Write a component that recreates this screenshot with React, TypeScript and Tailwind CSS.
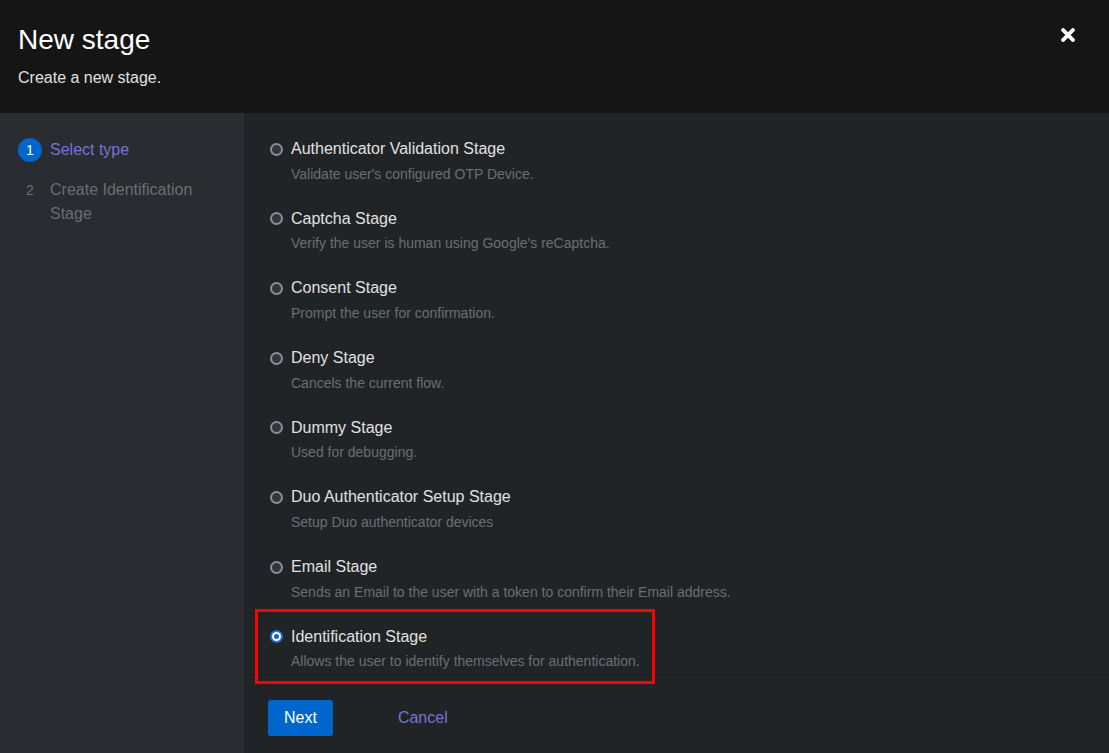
import React from "react";

const items = [
  ["Authenticator Validation Stage", "Validate user's configured OTP Device."],
  ["Captcha Stage", "Verify the user is human using Google's reCaptcha."],
  ["Consent Stage", "Prompt the user for confirmation."],
  ["Deny Stage", "Cancels the current flow."],
  ["Dummy Stage", "Used for debugging."],
  ["Duo Authenticator Setup Stage", "Setup Duo authenticator devices"],
  ["Email Stage", "Sends an Email to the user with a token to confirm their Email address."],
  ["Identification Stage", "Allows the user to identify themselves for authentication."],
];

function Radio({ checked }: { checked: boolean }) {
  if (checked) {
    return (
      <span className="w-[13px] h-[13px] rounded-full bg-[#1a73e8] flex items-center justify-center shrink-0">
        <span className="w-[9px] h-[9px] rounded-full bg-white flex items-center justify-center">
          <span className="w-[5px] h-[5px] rounded-full bg-[#2a5ea8]" />
        </span>
      </span>
    );
  }
  return <span className="w-[13px] h-[13px] rounded-full border-2 border-[#8d8b99] bg-[#35353d] shrink-0" />;
}

export default function App() {
  return (
    <div
      className="w-[1109px] h-[753px] flex flex-col overflow-hidden bg-[#212427]"
      style={{ fontFamily: '"Liberation Sans", Arial, sans-serif' }}
    >
      <header className="h-[113px] shrink-0 bg-[#151515] pl-[18px] pr-[34px] pt-[22px] flex justify-between">
        <div>
          <h1 className="text-[28px] leading-[36px] text-white">New stage</h1>
          <p className="mt-[8px] text-[16px] leading-[24px] text-[#e0e0e0]">Create a new stage.</p>
        </div>
        <button className="mt-[6px] h-[14px] w-[14px] text-white">
          <svg viewBox="0 80 352 352" width="14" height="14" fill="currentColor">
            <path d="M242.72 256l100.07-100.07c12.28-12.28 12.28-32.19 0-44.48l-22.24-22.24c-12.28-12.28-32.19-12.28-44.48 0L176 189.28 75.93 89.21c-12.28-12.28-32.19-12.28-44.48 0L9.21 111.45c-12.28 12.28-12.28 32.19 0 44.48L109.28 256 9.21 356.07c-12.28 12.28-12.28 32.19 0 44.48l22.24 22.24c12.28 12.28 32.2 12.28 44.48 0L176 322.72l100.07 100.07c12.28 12.28 32.2 12.28 44.48 0l22.24-22.24c12.28-12.28 12.28-32.19 0-44.48L242.72 256z" />
          </svg>
        </button>
      </header>
      <div className="flex flex-1 min-h-0">
        <aside className="w-[244px] shrink-0 bg-[#292c30] pt-[25px] pl-[18px] pr-[30px] flex flex-col gap-[16px]">
          <div className="flex items-center">
            <span className="w-[24px] h-[24px] shrink-0 rounded-full bg-[#0066cc] text-white text-[14px] flex items-center justify-center">1</span>
            <span className="ml-[8px] text-[16px] leading-[24px] text-[#7474d6]">Select type</span>
          </div>
          <div className="flex items-start">
            <span className="w-[24px] h-[24px] shrink-0 text-[#6a6e73] text-[14px] flex items-center justify-center">2</span>
            <span className="ml-[8px] text-[16px] leading-[24px] text-[#6a6e73]">Create Identification Stage</span>
          </div>
        </aside>
        <main className="flex-1 flex flex-col">
          <div className="flex-1 pt-[24px] pl-[26px] flex flex-col gap-[22.2px]">
            {items.map(([label, desc], i) => (
              <div key={label} className="relative">
                {i === 7 && (
                  <div className="absolute -left-[15px] -top-[16px] w-[400px] h-[75px] border-[3px] border-[#ff0000] z-10 pointer-events-none" />
                )}
                <div className="flex items-center h-[24px]">
                  <Radio checked={i === 7} />
                  <span className="ml-[8px] text-[16px] leading-[24px] text-[#e0e0e0]">{label}</span>
                </div>
                <div className="mt-[2.5px] pl-[21px] text-[14px] leading-[21px] text-[#6a6e73]">{desc}</div>
              </div>
            ))}
          </div>
          <footer className="h-[78px] shrink-0 border-t border-[#1c1e21] pl-[24px] pt-[24px] flex items-start">
            <button className="h-[36px] px-[16px] rounded-[3px] bg-[#0066cc] text-white text-[16px]">Next</button>
            <button className="ml-[49px] h-[36px] px-[16px] text-[#7474d6] text-[16px]">Cancel</button>
          </footer>
        </main>
      </div>
    </div>
  );
}
